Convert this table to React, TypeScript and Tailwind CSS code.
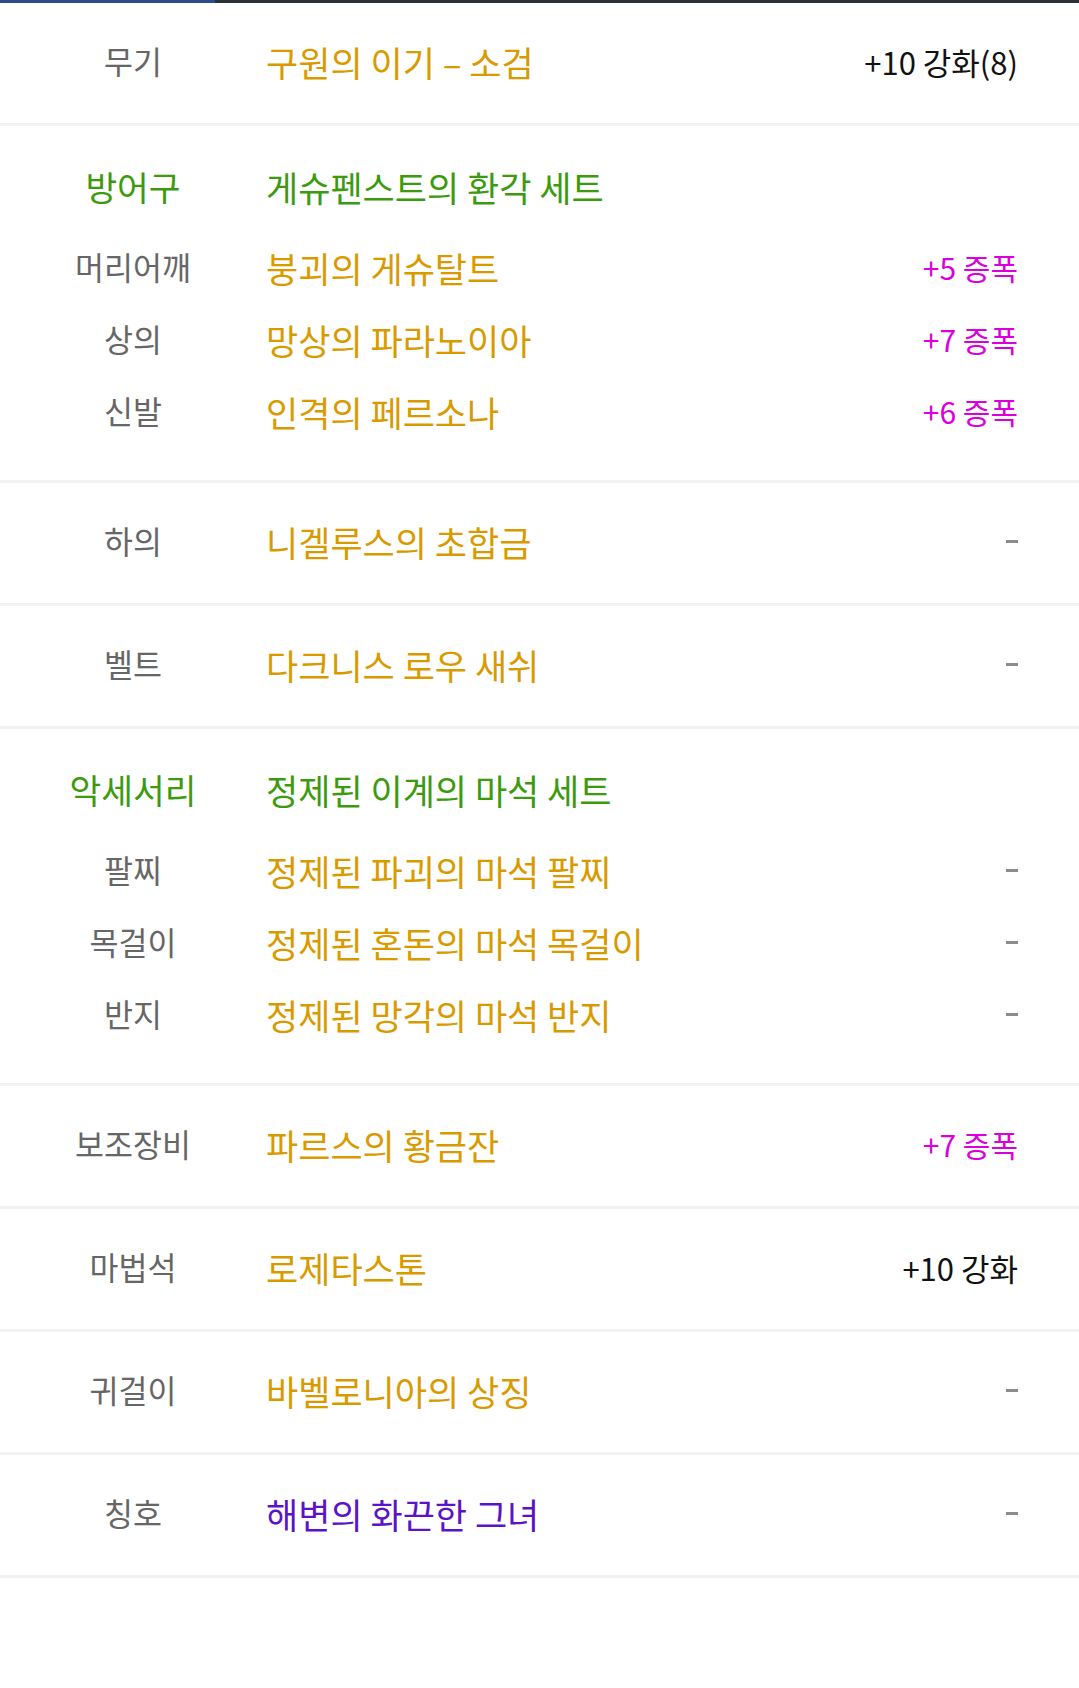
import React from "react";

type Item = { label: string; name: string; right?: string; rightType?: "black" | "amp" | "none"; nameColor?: string };

const FONT = { fontFamily: '"Noto Sans CJK KR", "Noto Sans", sans-serif' };

function Right({ right, rightType }: { right?: string; rightType?: Item["rightType"] }) {
  if (rightType === "black") return <span className="text-[31px] text-[#111111] whitespace-nowrap">{right}</span>;
  if (rightType === "amp") return <span className="text-[30px] text-[#d900dd] whitespace-nowrap">{right}</span>;
  return <span className="block w-[12px] h-[3px] bg-[#8c8c8c]" />;
}

function Line({ item, h }: { item: Item; h: string }) {
  return (
    <div className={`flex items-center pb-[4px] ${h}`}>
      <div className="w-[266px] shrink-0 text-center text-[31.5px] text-[#666666] leading-none">{item.label}</div>
      <div className={`flex-1 text-[35px] leading-none ${item.nameColor ?? "text-[#d99a00]"}`}>{item.name}</div>
      <div className="pr-[61px] flex items-center leading-none">
        <Right right={item.right} rightType={item.rightType} />
      </div>
    </div>
  );
}

function SingleRow({ item }: { item: Item }) {
  return (
    <div className="border-b-[3px] border-[#f2f2f2]">
      <Line item={item} h="h-[120px]" />
    </div>
  );
}

function Section({ label, title, items }: { label: string; title: string; items: Item[] }) {
  return (
    <div className="border-b-[3px] border-[#f2f2f2] pt-[26px] pb-[31px]">
      <div className="flex items-center h-[72px] mb-[9px] pb-[4px]">
        <div className="w-[266px] shrink-0 text-center text-[34.5px] text-[#3c9a0e] leading-none">{label}</div>
        <div className="flex-1 text-[35px] text-[#3c9a0e] leading-none">{title}</div>
      </div>
      {items.map((it) => (
        <Line key={it.label} item={it} h="h-[72px]" />
      ))}
    </div>
  );
}

export default function App() {
  return (
    <div className="w-[1079px] h-[1688px] bg-white" style={FONT}>
      <div className="flex h-[3px]">
        <div className="w-[215px] bg-[#2d4a8c]" />
        <div className="flex-1 bg-[#2b303b]" />
      </div>
      <SingleRow item={{ label: "무기", name: "구원의 이기 – 소검", right: "+10 강화(8)", rightType: "black" }} />
      <Section
        label="방어구"
        title="게슈펜스트의 환각 세트"
        items={[
          { label: "머리어깨", name: "붕괴의 게슈탈트", right: "+5 증폭", rightType: "amp" },
          { label: "상의", name: "망상의 파라노이아", right: "+7 증폭", rightType: "amp" },
          { label: "신발", name: "인격의 페르소나", right: "+6 증폭", rightType: "amp" },
        ]}
      />
      <SingleRow item={{ label: "하의", name: "니겔루스의 초합금", rightType: "none" }} />
      <SingleRow item={{ label: "벨트", name: "다크니스 로우 새쉬", rightType: "none" }} />
      <Section
        label="악세서리"
        title="정제된 이계의 마석 세트"
        items={[
          { label: "팔찌", name: "정제된 파괴의 마석 팔찌", rightType: "none" },
          { label: "목걸이", name: "정제된 혼돈의 마석 목걸이", rightType: "none" },
          { label: "반지", name: "정제된 망각의 마석 반지", rightType: "none" },
        ]}
      />
      <SingleRow item={{ label: "보조장비", name: "파르스의 황금잔", right: "+7 증폭", rightType: "amp" }} />
      <SingleRow item={{ label: "마법석", name: "로제타스톤", right: "+10 강화", rightType: "black" }} />
      <SingleRow item={{ label: "귀걸이", name: "바벨로니아의 상징", rightType: "none" }} />
      <SingleRow item={{ label: "칭호", name: "해변의 화끈한 그녀", rightType: "none", nameColor: "text-[#5b12c9]" }} />
    </div>
  );
}
